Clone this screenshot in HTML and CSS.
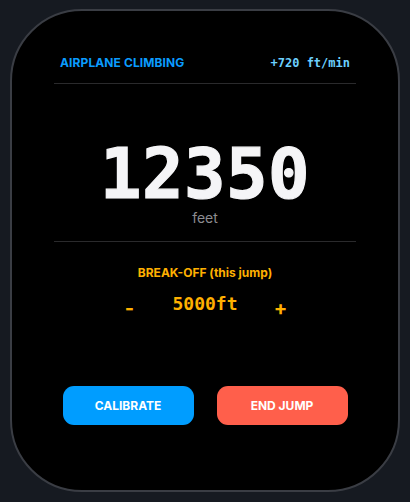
FILE: index.html
```html
<!DOCTYPE html>
<html lang="en">
<head>
<meta charset="utf-8">
<title>Altimeter</title>
<link rel="stylesheet" href="styles.css">
</head>
<body>
<div class="watch">
  <div class="header">
    <span class="status">AIRPLANE CLIMBING</span>
    <span class="rate">+720 ft/min</span>
  </div>
  <div class="altitude">
    <div class="value">12350</div>
    <div class="unit">feet</div>
  </div>
  <div class="breakoff">
    <div class="label">BREAK-OFF (this jump)</div>
    <div class="stepper">
      <button class="step minus">-</button>
      <span class="target">5000ft</span>
      <button class="step plus">+</button>
    </div>
  </div>
  <div class="actions">
    <button class="btn calibrate">CALIBRATE</button>
    <button class="btn end">END JUMP</button>
  </div>
</div>
</body>
</html>
```
FILE: styles.css
```css
* { box-sizing: border-box; }
html, body { margin: 0; padding: 0; }
body {
  background: #161a21;
  width: 410px;
  height: 502px;
  overflow: hidden;
  font-family: Inter, "Noto Sans", sans-serif;
}
.watch {
  margin: 9px 0 0 10px;
  width: 390px;
  height: 483px;
  border: 2px solid #3a3d44;
  border-radius: 72px;
  background: #000;
  padding: 44px 42px 0;
  display: flex;
  flex-direction: column;
}
.header {
  display: flex;
  justify-content: space-between;
  align-items: center;
  padding: 0 6px 12px;
  height: 29px;
  border-bottom: 1px solid #2a2a2c;
  line-height: 16px;
}
.status {
  color: #0a9cff;
  font-size: 12px;
  font-weight: 700;
  letter-spacing: 0.1px;
}
.rate {
  color: #6cd0ff;
  font-family: "DejaVu Sans Mono", monospace;
  font-size: 12px;
  font-weight: 700;
}
.altitude {
  display: flex;
  flex-direction: column;
  align-items: center;
  padding-top: 60px;
  padding-bottom: 15px;
  border-bottom: 1px solid #2a2a2c;
}
.value {
  font-family: "DejaVu Sans Mono", monospace;
  font-weight: 700;
  font-size: 69px;
  line-height: 60px;
  height: 60px;
  color: #f5f5f7;
  letter-spacing: 0.5px;
  -webkit-text-stroke: 1.2px #f5f5f7;
}
.unit {
  margin-top: 5px;
  font-size: 14px;
  line-height: 17px;
  color: #8c8c90;
}
.breakoff {
  display: flex;
  flex-direction: column;
  align-items: center;
  padding-top: 23px;
}
.label {
  color: #ffb000;
  font-size: 12px;
  font-weight: 700;
  line-height: 16px;
}
.stepper {
  margin-top: 12px;
  display: flex;
  align-items: flex-start;
  gap: 31px;
}
.target {
  color: #ffb000;
  font-family: "DejaVu Sans Mono", monospace;
  font-weight: 700;
  font-size: 18px;
  line-height: 22px;
}
.step {
  width: 24px;
  padding: 0;
  border: 0;
  background: transparent;
  color: #ffb000;
  font-family: Inter, sans-serif;
  font-weight: 700;
  font-size: 20px;
  line-height: 24px;
  margin-top: 3px;
  text-align: center;
}
.actions {
  margin-top: 66px;
  display: flex;
  justify-content: center;
  gap: 23px;
}
.btn {
  width: 131px;
  height: 39px;
  border: 0;
  border-radius: 11px;
  color: #fff;
  font-family: Inter, sans-serif;
  font-weight: 700;
  font-size: 12px;
  padding: 0;
}
.calibrate { background: #009dff; }
.end { background: #ff5f4b; }
```
